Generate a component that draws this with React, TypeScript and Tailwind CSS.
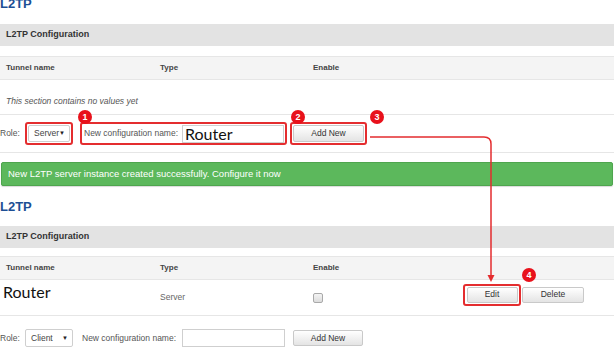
import React from "react";

const RED = "border-[#e42d2f]";

function Btn({ label, className = "" }: { label: string; className?: string }) {
  return (
    <div
      className={
        "flex items-center justify-center rounded-[2px] border border-[#c9c9c9] bg-gradient-to-b from-[#ffffff] to-[#e4e4e4] text-[8.5px] text-[#333] " +
        className
      }
    >
      {label}
    </div>
  );
}

function Select({ label, className = "" }: { label: string; className?: string }) {
  return (
    <div
      className={
        "flex items-center rounded-[2px] border border-[#cfcfcf] bg-white pl-[5px] pr-[4px] text-[8.5px] text-[#444] " +
        className
      }
    >
      <span>{label}</span>
      <span className="ml-auto text-[6px] text-[#222]">▼</span>
    </div>
  );
}

function Badge({ n, className }: { n: string; className: string }) {
  return (
    <div
      className={
        "absolute flex h-[14px] w-[14px] items-center justify-center rounded-full bg-[#e8111b] text-[9px] font-bold leading-none text-white " +
        className
      }
    >
      {n}
    </div>
  );
}

function Header() {
  return (
    <div className="grid h-[24px] grid-cols-[154px_153px_1fr] items-center border-y border-[#e6e6e6] bg-[#f4f4f4] pl-[6px] text-[8px] font-bold text-[#444]">
      <span>Tunnel name</span>
      <span>Type</span>
      <span>Enable</span>
    </div>
  );
}

export default function App() {
  return (
    <div className="relative h-[347px] w-[614px] overflow-hidden bg-white font-['Liberation_Sans',Arial,sans-serif]">
      {/* Section 1 */}
      <div className="-mt-[4px] h-[28px] text-[13px] font-bold leading-[16px] text-[#1d4f94]">L2TP</div>
      <div className="flex h-[22px] items-center bg-[#e3e3e3] pl-[6px] text-[9px] font-bold text-[#333]">
        L2TP Configuration
      </div>
      <div className="mt-[10px]">
        <Header />
      </div>
      <div className="flex h-[35px] items-end border-b border-[#e6e6e6] pb-[6px] pl-[6px] text-[8.5px] italic text-[#555]">
        This section contains no values yet
      </div>
      <div className="flex h-[38px] items-center border-b border-[#e6e6e6] text-[8.5px] text-[#555]">
        <span className="w-[25px]">Role:</span>
        <div className={"flex h-[23px] w-[48px] items-center rounded-[3px] border-2 p-[1px] " + RED}>
          <Select label="Server" className="h-[17px] w-full" />
        </div>
        <div className={"ml-[7px] flex h-[23px] w-[207px] items-center rounded-[3px] border-2 pl-[2px] " + RED}>
          <span className="w-[98px]">New configuration name:</span>
          <div className="flex h-[18px] w-[102px] items-center border border-[#cfcfcf] bg-white pl-[2px] font-['Lato','Open_Sans',sans-serif] text-[16px] leading-none text-[#111]">
            Router
          </div>
        </div>
        <div className={"ml-[3px] flex h-[23px] w-[77px] items-center justify-center rounded-[3px] border-2 " + RED}>
          <Btn label="Add New" className="h-[17px] w-[71px]" />
        </div>
      </div>

      {/* Success message */}
      <div className="mx-[1px] mt-[9px] flex h-[24px] items-center rounded-[2px] border border-[#4ea54e] bg-[#5cb85c] pl-[6px] text-[9.5px] text-white shadow-[0_1px_1px_rgba(0,0,0,0.15)]">
        New L2TP server instance created successfully. Configure it now
      </div>

      {/* Section 2 */}
      <div className="h-[40px] pt-[12px] text-[13px] font-bold leading-[18px] text-[#1d4f94]">L2TP</div>
      <div className="flex h-[22px] items-center bg-[#e3e3e3] pl-[6px] text-[9px] font-bold text-[#333]">
        L2TP Configuration
      </div>
      <div className="mt-[8px]">
        <Header />
      </div>
      <div className="grid h-[36px] grid-cols-[154px_153px_150px_1fr] items-center border-b border-[#e6e6e6] pl-[6px] text-[8.5px] text-[#666]">
        <span className="-ml-[3px] -mt-[12px] font-['Lato','Open_Sans',sans-serif] text-[16px] leading-none text-[#111]">
          Router
        </span>
        <span>Server</span>
        <div className="h-[10px] w-[10px] rounded-[2px] border border-[#a9a9a9] bg-gradient-to-b from-[#f4f4f4] to-[#dcdcdc]" />
        <div className="-mt-[6px] flex items-center">
          <div className={"flex h-[22px] w-[58px] items-center justify-center rounded-[3px] border-2 " + RED}>
            <Btn label="Edit" className="h-[16px] w-[51px]" />
          </div>
          <Btn label="Delete" className="ml-[1px] h-[16px] w-[62px]" />
        </div>
      </div>
      <div className="flex h-[44px] items-center text-[8.5px] text-[#555]">
        <span className="w-[25px]">Role:</span>
        <Select label="Client" className="h-[18px] w-[48px]" />
        <span className="ml-[9px] w-[100px]">New configuration name:</span>
        <div className="h-[18px] w-[103px] border border-[#cfcfcf] bg-white" />
        <Btn label="Add New" className="ml-[8px] h-[16px] w-[70px]" />
      </div>

      {/* Annotations */}
      <svg className="pointer-events-none absolute left-0 top-0" width="614" height="347" viewBox="0 0 614 347">
        <path d="M370 137 H484 Q491 137 491 144 V276" fill="none" stroke="#e42d2f" strokeWidth="1.5" />
        <polygon points="487.5,275 494.5,275 491,282" fill="#e42d2f" />
      </svg>
      <Badge n="1" className="left-[78px] top-[110px]" />
      <Badge n="2" className="left-[291px] top-[110px]" />
      <Badge n="3" className="left-[370px] top-[110px]" />
      <Badge n="4" className="left-[522px] top-[268px]" />
    </div>
  );
}
